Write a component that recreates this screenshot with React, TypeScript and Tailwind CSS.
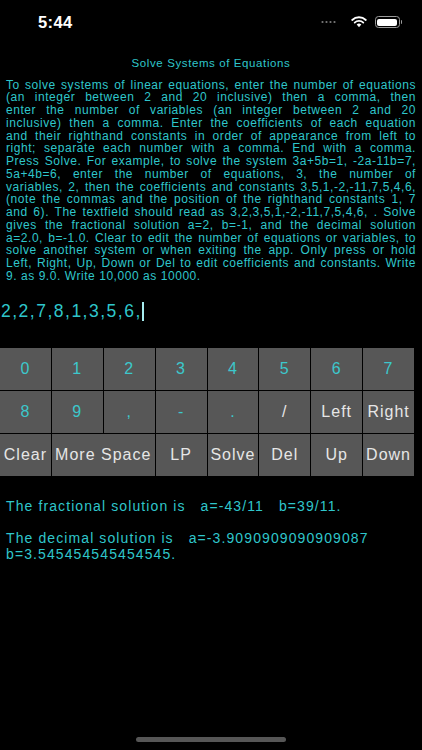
import React from 'react';

const intro = [
  'To solve systems of linear equations, enter the number of equations',
  '(an integer between 2 and 20 inclusive) then a comma, then',
  'enter the number of variables (an integer between 2 and 20',
  'inclusive) then a comma. Enter the coefficients of each equation',
  'and their righthand constants in order of appearance from left to',
  'right; separate each number with a comma. End with a comma.',
  'Press Solve. For example, to solve the system 3a+5b=1, -2a-11b=7,',
  '5a+4b=6, enter the number of equations, 3, the number of',
  'variables, 2, then the coefficients and constants 3,5,1,-2,-11,7,5,4,6,',
  '(note the commas and the position of the righthand constants  1, 7',
  'and 6). The textfield should read as 3,2,3,5,1,-2,-11,7,5,4,6, . Solve',
  'gives the fractional solution a=2, b=-1, and the decimal solution',
  'a=2.0, b=-1.0. Clear to edit the number of equations or variables, to',
  'solve another system or when exiting the app. Only press or hold',
  'Left, Right, Up, Down or Del to edit coefficients and constants. Write',
  '9. as 9.0. Write 10,000 as 10000.',
];

type Key = { label: string; white?: boolean; wide?: boolean };

const keys: Key[] = [
  { label: '0' }, { label: '1' }, { label: '2' }, { label: '3' },
  { label: '4' }, { label: '5' }, { label: '6' }, { label: '7' },
  { label: '8' }, { label: '9' }, { label: ',' }, { label: '-' },
  { label: '.' }, { label: '/', white: true }, { label: 'Left', white: true }, { label: 'Right', white: true },
  { label: 'Clear', white: true }, { label: 'More Space', white: true, wide: true }, { label: 'LP', white: true },
  { label: 'Solve', white: true }, { label: 'Del', white: true }, { label: 'Up', white: true }, { label: 'Down', white: true },
];

function StatusBar() {
  return (
    <div className="h-[44px] flex items-center justify-between pl-[38px] pr-[20px]">
      <span className="text-[16.5px] font-bold text-white tracking-[0.4px]">5:44</span>
      <div className="flex items-center gap-[6px]">
        <svg width="16" height="4" viewBox="0 0 16 4">
          {[1, 5, 9, 13].map((x) => (
            <circle key={x} cx={x + 0.5} cy="2" r="1.1" fill="#7a7a7a" />
          ))}
        </svg>
        <svg width="16" height="12" viewBox="0 0 16 12" className="ml-[8px]">
          <path d="M8 11.2 L10.3 8.6 A3.4 3.4 0 0 0 5.7 8.6 Z" fill="white" />
          <path d="M3.7 6.6 A6.2 6.2 0 0 1 12.3 6.6" stroke="white" strokeWidth="1.8" fill="none" strokeLinecap="round" />
          <path d="M1.2 4 A9.8 9.8 0 0 1 14.8 4" stroke="white" strokeWidth="1.8" fill="none" strokeLinecap="round" />
        </svg>
        <div className="flex items-center gap-[1px] ml-[2px]">
          <div className="w-[25px] h-[12px] rounded-[3.5px] border border-[#9a9a9a] p-[1.5px]">
            <div className="w-full h-full rounded-[2px] bg-white" />
          </div>
          <div className="w-[1.5px] h-[4px] rounded-r-sm bg-[#9a9a9a]" />
        </div>
      </div>
    </div>
  );
}

export default function App() {
  return (
    <div className="w-[422px] h-[750px] bg-black flex flex-col font-['Liberation_Sans',Arial,sans-serif] overflow-hidden">
      <StatusBar />

      <div className="mt-[12px] text-center text-[11.5px] leading-[14px] tracking-[0.6px] text-[#2fc6cb]">
        Solve Systems of Equations
      </div>

      <div className="mt-[8.5px] px-[6px] text-[12px] leading-[12.75px] tracking-[0.55px] text-[#2fc6cb]">
        {intro.map((line, i) => (
          <div
            key={i}
            className={
              i === intro.length - 1
                ? 'whitespace-nowrap text-left'
                : 'whitespace-nowrap text-justify [text-align-last:justify]'
            }
          >
            {line}
          </div>
        ))}
      </div>

      <div className="mt-[16.5px] h-[24px] pl-[1px] flex items-center text-[17.5px] tracking-[1.5px] text-[#2fc6cb]">
        <span>2,2,7,8,1,3,5,6,</span>
        <span className="w-[2px] h-[19px] bg-[#a6ecef]" />
      </div>

      <div className="mt-[25px] w-[414px] grid grid-cols-8 gap-px bg-black">
        {keys.map((k, i) => (
          <div
            key={i}
            className={`h-[42px] bg-[#575757] flex items-center justify-center text-[16px] tracking-[1px] whitespace-nowrap ${
              k.wide ? 'col-span-2' : ''
            } ${k.white ? 'text-[#e6e6e6]' : 'text-[#3cc8cc]'}`}
          >
            {k.label}
          </div>
        ))}
      </div>

      <div className="mt-[22px] px-[6px] text-[14px] leading-[16px] tracking-[1.1px] text-[#2fc6cb] whitespace-pre">
        <div>The fractional solution is   a=-43/11   b=39/11.</div>
        <div className="mt-[16px]">The decimal solution is   a=-3.9090909090909087</div>
        <div>b=3.545454545454545.</div>
      </div>

      <div className="mt-auto mb-[8px] self-center w-[150px] h-[5px] rounded-full bg-[#565656]" />
    </div>
  );
}
